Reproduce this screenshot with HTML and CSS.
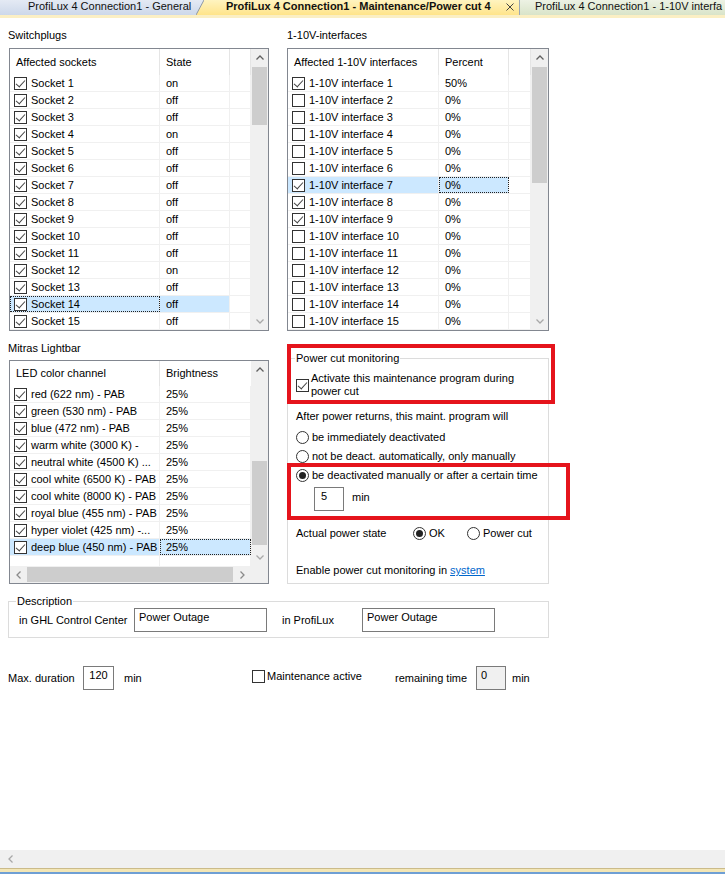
FILE: index.html
```html
<!DOCTYPE html>
<html lang="en">
<head>
<meta charset="utf-8">
<title>ProfiLux 4 Connection1 - Maintenance/Power cut 4</title>
<link rel="stylesheet" href="styles.css">
</head>
<body>
<header class="tabbar">
  <div class="tab tab-general">ProfiLux 4 Connection1 - General</div>
  <svg class="tab-slant" width="8" height="15" viewBox="0 0 8 15">
    <defs>
      <linearGradient id="gBlue" x1="0" y1="0" x2="0" y2="1"><stop offset="0" stop-color="#e4eaf4"/><stop offset="1" stop-color="#cdd8ea"/></linearGradient>
      <linearGradient id="gYellow" x1="0" y1="0" x2="0" y2="1"><stop offset="0" stop-color="#fff4c0"/><stop offset="1" stop-color="#ffe48a"/></linearGradient>
    </defs>
    <polygon points="0,0 8,0 0,15" fill="url(#gBlue)"/>
    <polygon points="8,0 8,15 0,15" fill="url(#gYellow)"/>
    <line x1="0" y1="15" x2="8" y2="0" stroke="#8d97a6" stroke-width="1"/>
  </svg>
  <div class="tab tab-active">
    <span>ProfiLux 4 Connection1 - Maintenance/Power cut 4</span>
    <svg class="tab-close" width="8" height="8" viewBox="0 0 8 8"><path d="M0.5 0.5 L7.5 7.5 M7.5 0.5 L0.5 7.5" stroke="#444" stroke-width="1" fill="none"/></svg>
  </div>
  <div class="tab tab-other">ProfiLux 4 Connection1 - 1-10V interfa</div>
</header>
<div class="tabbar-rule"></div>

<main class="page">
  <div class="panels">
    <!-- Switchplugs -->
    <section class="block">
      <div class="caption">Switchplugs</div>
      <div class="lv lv-left lv-tall">
        <div class="lv-cols">
          <div class="lv-head cols-3"><div class="hcell">Affected sockets</div><div class="hcell">State</div><div class="hcell"></div></div>
          <div class="lv-row cols-3"><div class="cell c1"><span class="cb on"></span>Socket 1</div><div class="cell c2">on</div><div class="cell"></div></div>
          <div class="lv-row cols-3"><div class="cell c1"><span class="cb on"></span>Socket 2</div><div class="cell c2">off</div><div class="cell"></div></div>
          <div class="lv-row cols-3"><div class="cell c1"><span class="cb on"></span>Socket 3</div><div class="cell c2">off</div><div class="cell"></div></div>
          <div class="lv-row cols-3"><div class="cell c1"><span class="cb on"></span>Socket 4</div><div class="cell c2">on</div><div class="cell"></div></div>
          <div class="lv-row cols-3"><div class="cell c1"><span class="cb on"></span>Socket 5</div><div class="cell c2">off</div><div class="cell"></div></div>
          <div class="lv-row cols-3"><div class="cell c1"><span class="cb on"></span>Socket 6</div><div class="cell c2">off</div><div class="cell"></div></div>
          <div class="lv-row cols-3"><div class="cell c1"><span class="cb on"></span>Socket 7</div><div class="cell c2">off</div><div class="cell"></div></div>
          <div class="lv-row cols-3"><div class="cell c1"><span class="cb on"></span>Socket 8</div><div class="cell c2">off</div><div class="cell"></div></div>
          <div class="lv-row cols-3"><div class="cell c1"><span class="cb on"></span>Socket 9</div><div class="cell c2">off</div><div class="cell"></div></div>
          <div class="lv-row cols-3"><div class="cell c1"><span class="cb on"></span>Socket 10</div><div class="cell c2">off</div><div class="cell"></div></div>
          <div class="lv-row cols-3"><div class="cell c1"><span class="cb on"></span>Socket 11</div><div class="cell c2">off</div><div class="cell"></div></div>
          <div class="lv-row cols-3"><div class="cell c1"><span class="cb on"></span>Socket 12</div><div class="cell c2">on</div><div class="cell"></div></div>
          <div class="lv-row cols-3"><div class="cell c1"><span class="cb on"></span>Socket 13</div><div class="cell c2">off</div><div class="cell"></div></div>
          <div class="lv-row cols-3 sel"><div class="cell c1 focus"><span class="cb on"></span>Socket 14</div><div class="cell c2">off</div><div class="cell"></div></div>
          <div class="lv-row cols-3"><div class="cell c1"><span class="cb on"></span>Socket 15</div><div class="cell c2">off</div><div class="cell"></div></div>
        </div>
        <div class="vscroll">
          <div class="sb-btn"><svg width="8" height="5" viewBox="0 0 8 5"><path d="M0.5 4.5 L4 1 L7.5 4.5" class="chev-dark"/></svg></div>
          <div class="sb-track"><div class="sb-thumb thumb-sockets"></div></div>
          <div class="sb-btn"><svg width="8" height="5" viewBox="0 0 8 5"><path d="M0.5 0.5 L4 4 L7.5 0.5" class="chev-light"/></svg></div>
        </div>
      </div>
    </section>

    <!-- 1-10V interfaces -->
    <section class="block">
      <div class="caption">1-10V-interfaces</div>
      <div class="lv lv-right lv-tall">
        <div class="lv-cols">
          <div class="lv-head cols-3w"><div class="hcell">Affected 1-10V interfaces</div><div class="hcell">Percent</div><div class="hcell"></div></div>
          <div class="lv-row cols-3w"><div class="cell c1"><span class="cb on"></span>1-10V interface 1</div><div class="cell c2">50%</div><div class="cell"></div></div>
          <div class="lv-row cols-3w"><div class="cell c1"><span class="cb"></span>1-10V interface 2</div><div class="cell c2">0%</div><div class="cell"></div></div>
          <div class="lv-row cols-3w"><div class="cell c1"><span class="cb"></span>1-10V interface 3</div><div class="cell c2">0%</div><div class="cell"></div></div>
          <div class="lv-row cols-3w"><div class="cell c1"><span class="cb"></span>1-10V interface 4</div><div class="cell c2">0%</div><div class="cell"></div></div>
          <div class="lv-row cols-3w"><div class="cell c1"><span class="cb"></span>1-10V interface 5</div><div class="cell c2">0%</div><div class="cell"></div></div>
          <div class="lv-row cols-3w"><div class="cell c1"><span class="cb"></span>1-10V interface 6</div><div class="cell c2">0%</div><div class="cell"></div></div>
          <div class="lv-row cols-3w sel"><div class="cell c1"><span class="cb on"></span>1-10V interface 7</div><div class="cell c2 focus">0%</div><div class="cell"></div></div>
          <div class="lv-row cols-3w"><div class="cell c1"><span class="cb on"></span>1-10V interface 8</div><div class="cell c2">0%</div><div class="cell"></div></div>
          <div class="lv-row cols-3w"><div class="cell c1"><span class="cb on"></span>1-10V interface 9</div><div class="cell c2">0%</div><div class="cell"></div></div>
          <div class="lv-row cols-3w"><div class="cell c1"><span class="cb"></span>1-10V interface 10</div><div class="cell c2">0%</div><div class="cell"></div></div>
          <div class="lv-row cols-3w"><div class="cell c1"><span class="cb"></span>1-10V interface 11</div><div class="cell c2">0%</div><div class="cell"></div></div>
          <div class="lv-row cols-3w"><div class="cell c1"><span class="cb"></span>1-10V interface 12</div><div class="cell c2">0%</div><div class="cell"></div></div>
          <div class="lv-row cols-3w"><div class="cell c1"><span class="cb"></span>1-10V interface 13</div><div class="cell c2">0%</div><div class="cell"></div></div>
          <div class="lv-row cols-3w"><div class="cell c1"><span class="cb"></span>1-10V interface 14</div><div class="cell c2">0%</div><div class="cell"></div></div>
          <div class="lv-row cols-3w"><div class="cell c1"><span class="cb"></span>1-10V interface 15</div><div class="cell c2">0%</div><div class="cell"></div></div>
        </div>
        <div class="vscroll">
          <div class="sb-btn"><svg width="8" height="5" viewBox="0 0 8 5"><path d="M0.5 4.5 L4 1 L7.5 4.5" class="chev-dark"/></svg></div>
          <div class="sb-track"><div class="sb-thumb thumb-interfaces"></div></div>
          <div class="sb-btn"><svg width="8" height="5" viewBox="0 0 8 5"><path d="M0.5 0.5 L4 4 L7.5 0.5" class="chev-light"/></svg></div>
        </div>
      </div>
    </section>

    <!-- Mitras Lightbar -->
    <section class="block">
      <div class="caption">Mitras Lightbar</div>
      <div class="lv lv-left lv-led">
        <div class="lv-main">
          <div class="lv-view">
            <div class="lv-cols">
              <div class="lv-head lv-head-short cols-2"><div class="hcell">LED color channel</div><div class="hcell hcell-last">Brightness</div></div>
              <div class="lv-row cols-2"><div class="cell c1"><span class="cb on"></span>red (622 nm) - PAB</div><div class="cell c2">25%</div></div>
              <div class="lv-row cols-2"><div class="cell c1"><span class="cb on"></span>green (530 nm) - PAB</div><div class="cell c2">25%</div></div>
              <div class="lv-row cols-2"><div class="cell c1"><span class="cb on"></span>blue (472 nm) - PAB</div><div class="cell c2">25%</div></div>
              <div class="lv-row cols-2"><div class="cell c1"><span class="cb on"></span>warm white (3000 K) -</div><div class="cell c2">25%</div></div>
              <div class="lv-row cols-2"><div class="cell c1"><span class="cb on"></span>neutral white (4500 K) ...</div><div class="cell c2">25%</div></div>
              <div class="lv-row cols-2"><div class="cell c1"><span class="cb on"></span>cool white (6500 K) - PAB</div><div class="cell c2">25%</div></div>
              <div class="lv-row cols-2"><div class="cell c1"><span class="cb on"></span>cool white (8000 K) - PAB</div><div class="cell c2">25%</div></div>
              <div class="lv-row cols-2"><div class="cell c1"><span class="cb on"></span>royal blue (455 nm) - PAB</div><div class="cell c2">25%</div></div>
              <div class="lv-row cols-2"><div class="cell c1"><span class="cb on"></span>hyper violet (425 nm) -...</div><div class="cell c2">25%</div></div>
              <div class="lv-row cols-2 sel"><div class="cell c1"><span class="cb on"></span>deep blue (450 nm) - PAB</div><div class="cell c2 focus">25%</div></div>
              <div class="lv-fill cols-2"><div class="cell"></div><div class="cell"></div></div>
            </div>
            <div class="vscroll">
              <div class="sb-btn"><svg width="8" height="5" viewBox="0 0 8 5"><path d="M0.5 4.5 L4 1 L7.5 4.5" class="chev-dark"/></svg></div>
              <div class="sb-track"><div class="sb-thumb thumb-led"></div></div>
              <div class="sb-btn"><svg width="8" height="5" viewBox="0 0 8 5"><path d="M0.5 0.5 L4 4 L7.5 0.5" class="chev-light"/></svg></div>
            </div>
          </div>
          <div class="hbar">
            <div class="hscroll">
              <div class="sb-btn"><svg width="5" height="8" viewBox="0 0 5 8"><path d="M4.5 0.5 L1 4 L4.5 7.5" class="chev-mid"/></svg></div>
              <div class="sb-htrack"><div class="sb-hthumb"></div></div>
              <div class="sb-btn"><svg width="5" height="8" viewBox="0 0 5 8"><path d="M0.5 0.5 L4 4 L0.5 7.5" class="chev-mid"/></svg></div>
            </div>
            <div class="sb-corner"></div>
          </div>
        </div>
      </div>
    </section>

    <!-- Power cut monitoring -->
    <section class="block">
      <fieldset class="group group-power">
        <legend>Power cut monitoring</legend>
        <label class="opt opt-activate"><span class="cb on"></span><span class="opt-text">Activate this maintenance program during power cut</span></label>
        <div class="pc-intro">After power returns, this maint. program will</div>
        <label class="opt radio-row"><span class="rb"></span>be immediately deactivated</label>
        <label class="opt radio-row"><span class="rb"></span>not be deact. automatically, only manually</label>
        <label class="opt radio-row"><span class="rb on"></span>be deactivated manually or after a certain time</label>
        <div class="timer-row"><span class="tbox tbox-timer">5</span><span class="unit">min</span></div>
        <div class="state-row">
          <span class="state-label">Actual power state</span>
          <label class="opt opt-ok"><span class="rb on"></span>OK</label>
          <label class="opt"><span class="rb"></span>Power cut</label>
        </div>
        <div class="pc-link">Enable power cut monitoring in <a href="#system">system</a></div>
      </fieldset>
    </section>
  </div>

  <fieldset class="group group-desc">
    <legend>Description</legend>
    <div class="desc-row">
      <span class="desc-label desc-label-ghl">in GHL Control Center</span>
      <span class="tbox tbox-desc">Power Outage</span>
      <span class="desc-label desc-label-plx">in ProfiLux</span>
      <span class="tbox tbox-desc">Power Outage</span>
    </div>
  </fieldset>

  <div class="duration-row">
    <span class="dur-label">Max. duration</span>
    <span class="tbox tbox-num">120</span>
    <span class="dur-unit">min</span>
    <label class="opt opt-active"><span class="cb"></span>Maintenance active</label>
    <span class="remain-label">remaining time</span>
    <span class="tbox tbox-remain">0</span>
    <span class="remain-unit">min</span>
  </div>
</main>

<div class="page-scroll">
  <div class="page-scroll-btn"><svg width="5" height="8" viewBox="0 0 5 8"><path d="M4.5 0.5 L1 4 L4.5 7.5" class="chev-light"/></svg></div>
</div>
<div class="statusrule"></div>

<div class="mark mark-activate"></div>
<div class="mark mark-timer"></div>
</body>
</html>
```

FILE: styles.css
```css
* { box-sizing: border-box; }

html, body { margin: 0; padding: 0; }

body {
  position: relative;
  width: 725px;
  height: 874px;
  overflow: hidden;
  background: #fff;
  color: #000;
  font: 11px/13px "Liberation Sans", Arial, sans-serif;
  display: flex;
  flex-direction: column;
}

/* ---------- document tabs ---------- */
.tabbar {
  display: flex;
  flex: none;
  height: 15px;
  white-space: nowrap;
  overflow: hidden;
}
.tab {
  flex: none;
  height: 15px;
  line-height: 13px;
  color: #111;
}
.tab-general {
  width: 196px;
  padding-left: 28px;
  background: linear-gradient(#e4eaf4, #cdd8ea);
}
.tab-slant { flex: none; display: block; }
.tab-active {
  width: 315px;
  padding-left: 22px;
  font-weight: bold;
  background: linear-gradient(#fff4c0, #ffe48a);
  display: flex;
  align-items: flex-start;
}
.tab-close { margin: 3px 0 0 15px; flex: none; }
.tab-other {
  flex: 1;
  min-width: 0;
  padding-left: 15px;
  overflow: hidden;
  border-left: 1px solid #9aa6b4;
  background: linear-gradient(#edf2e4, #d9e4c9);
}
.tabbar-rule {
  flex: none;
  height: 3px;
  background: #fbefc4;
}

/* ---------- page body ---------- */
.page {
  flex: 1;
  padding: 11px 0 0 8px;
  display: flex;
  flex-direction: column;
}

.panels {
  display: grid;
  grid-template-columns: 261px 262px;
  column-gap: 18px;
  row-gap: 11px;
}

.caption { height: 13px; }

/* ---------- list views ---------- */
.lv {
  margin-top: 6px;
  border: 1px solid #828790;
  display: flex;
  background: #fff;
}
.lv-left { margin-left: 1px; width: 260px; }
.lv-right { width: 262px; }
.lv-tall { height: 283px; }
.lv-led { height: 224px; margin-top: 5px; }

.lv-cols {
  flex: 1;
  display: flex;
  flex-direction: column;
  overflow: hidden;
}
.cols-3 { display: grid; grid-template-columns: 150px 70px 1fr; }
.cols-3w { display: grid; grid-template-columns: 151px 70px 1fr; }
.cols-2 { display: grid; grid-template-columns: 150px 1fr; }

.lv-head { height: 26px; flex: none; }
.lv-head-short { height: 25px; }
.hcell {
  display: flex;
  align-items: center;
  padding-left: 6px;
  border-right: 1px solid #e5e5e5;
  white-space: nowrap;
}
.hcell-last { border-right: 0; }

.lv-row {
  height: 17px;
  flex: none;
  border-bottom: 1px solid #f0f0f0;
}
.cell {
  display: flex;
  align-items: center;
  border-right: 1px solid #f0f0f0;
  white-space: nowrap;
  overflow: hidden;
}
.c1 { padding-left: 4px; gap: 4px; }
.c2 { padding-left: 6px; }
.lv-row.sel .c1,
.lv-row.sel .c2 { background: #cce8ff; }
.focus { outline: 1px dotted #222; outline-offset: -1px; }

.lv-fill { flex: 1; }

.lv-main { flex: 1; display: flex; flex-direction: column; }
.lv-view { flex: 1; display: flex; }

/* ---------- scroll bars ---------- */
.vscroll {
  width: 17px;
  flex: none;
  display: flex;
  flex-direction: column;
  background: #f0f0f0;
}
.sb-btn {
  flex: none;
  width: 17px;
  height: 17px;
  display: flex;
  align-items: center;
  justify-content: center;
}
.sb-btn svg { display: block; }
.sb-track { flex: 1; padding: 0 1px; }
.sb-thumb { background: #cdcdcd; }
.thumb-sockets { margin-top: 1px; height: 58px; }
.thumb-interfaces { margin-top: 1px; height: 116px; }
.thumb-led { margin-top: 83px; height: 84px; }

.hbar { height: 17px; flex: none; display: flex; }
.hscroll { flex: 1; display: flex; background: #f0f0f0; }
.sb-htrack { flex: 1; padding: 1px 0; }
.sb-hthumb { height: 100%; width: 206px; background: #cdcdcd; }
.sb-corner { width: 17px; flex: none; background: #f0f0f0; }

.chev-dark, .chev-light, .chev-mid { fill: none; stroke-width: 1.3; }
.chev-dark { stroke: #606060; }
.chev-mid { stroke: #8a8a8a; }
.chev-light { stroke: #a8a8a8; }

/* ---------- check boxes & radio buttons ---------- */
.cb {
  position: relative;
  flex: none;
  width: 13px;
  height: 13px;
  border: 1px solid #333;
  background: #fff;
}
.cb.on::after {
  content: "";
  position: absolute;
  left: 3px;
  top: 0px;
  width: 4px;
  height: 8px;
  border: solid #444;
  border-width: 0 1px 1px 0;
  transform: rotate(42deg);
}
.rb {
  flex: none;
  width: 13px;
  height: 13px;
  border: 1px solid #333;
  border-radius: 50%;
  background: #fff;
  display: flex;
  align-items: center;
  justify-content: center;
}
.rb.on::after {
  content: "";
  width: 7px;
  height: 7px;
  border-radius: 50%;
  background: #222;
}
.opt {
  display: flex;
  align-items: center;
  gap: 3px;
  white-space: nowrap;
}

/* ---------- group boxes ---------- */
.group {
  margin: 0;
  border: 1px solid #dcdcdc;
  min-width: 0;
}
.group legend {
  padding: 0 1px;
  margin-left: -1px;
  line-height: 13px;
}

.group-power {
  margin-top: 10px;
  height: 232px;
  padding: 0 8px 0 8px;
  display: flex;
  flex-direction: column;
}
.opt-activate { margin-top: 7px; align-items: center; gap: 2px; }
.opt-activate .opt-text { white-space: normal; width: 215px; }
.pc-intro { margin-top: 12px; }
.radio-row { height: 19px; }
.pc-intro + .radio-row { margin-top: 5px; }

.timer-row {
  margin-top: 2px;
  display: flex;
  align-items: center;
  padding-left: 18px;
}
.unit { margin-left: 8px; margin-top: -3px; }

.state-row {
  margin-top: 13px;
  height: 19px;
  display: flex;
  align-items: center;
}
.state-label { width: 117px; }
.opt-ok { width: 54px; }

.pc-link { margin-top: 21px; }
.pc-link a { color: #0066cc; text-decoration: underline; }

/* ---------- text boxes ---------- */
.tbox {
  flex: none;
  height: 24px;
  border: 1px solid #7a7a7a;
  background: #fff;
  padding: 2px 0 0 4px;
  white-space: nowrap;
}
.tbox-timer { width: 30px; padding-left: 6px; }
.tbox-desc { width: 133px; }
.tbox-num { width: 31px; padding-left: 0; text-align: center; }
.tbox-remain { width: 30px; background: #f0f0f0; }

/* ---------- description ---------- */
.group-desc {
  margin-top: 11px;
  width: 541px;
  padding: 0 8px 5px 8px;
}
.desc-row { display: flex; align-items: center; }
.desc-label { margin-top: 0; }
.desc-label-ghl { margin-left: 2px; width: 115px; }
.desc-label-plx { margin-left: 15px; width: 80px; }

/* ---------- duration line ---------- */
.duration-row {
  margin-top: 28px;
  display: flex;
  align-items: center;
  height: 24px;
}
.dur-label { width: 75px; }
.dur-unit { margin-left: 10px; width: 128px; }
.opt-active { width: 143px; gap: 2px; margin-top: -3px; }
.remain-label { width: 81px; }
.remain-unit { margin-left: 6px; }

/* ---------- window bottom ---------- */
.page-scroll {
  flex: none;
  height: 18px;
  background: #f0f0f0;
  display: flex;
}
.page-scroll-btn {
  width: 20px;
  display: flex;
  align-items: center;
  justify-content: center;
}
.statusrule {
  flex: none;
  height: 6px;
  background: linear-gradient(#cbbb8a 0 1px, #f3e6b6 1px 4px, #6f9fd4 4px 6px);
}

/* ---------- highlight frames drawn over the form ---------- */
.mark {
  position: absolute;
  border: 4px solid #e5141c;
  pointer-events: none;
}
.mark-activate { left: 287px; top: 344px; width: 268px; height: 60px; }
.mark-timer { left: 287px; top: 463px; width: 283px; height: 57px; }
```
